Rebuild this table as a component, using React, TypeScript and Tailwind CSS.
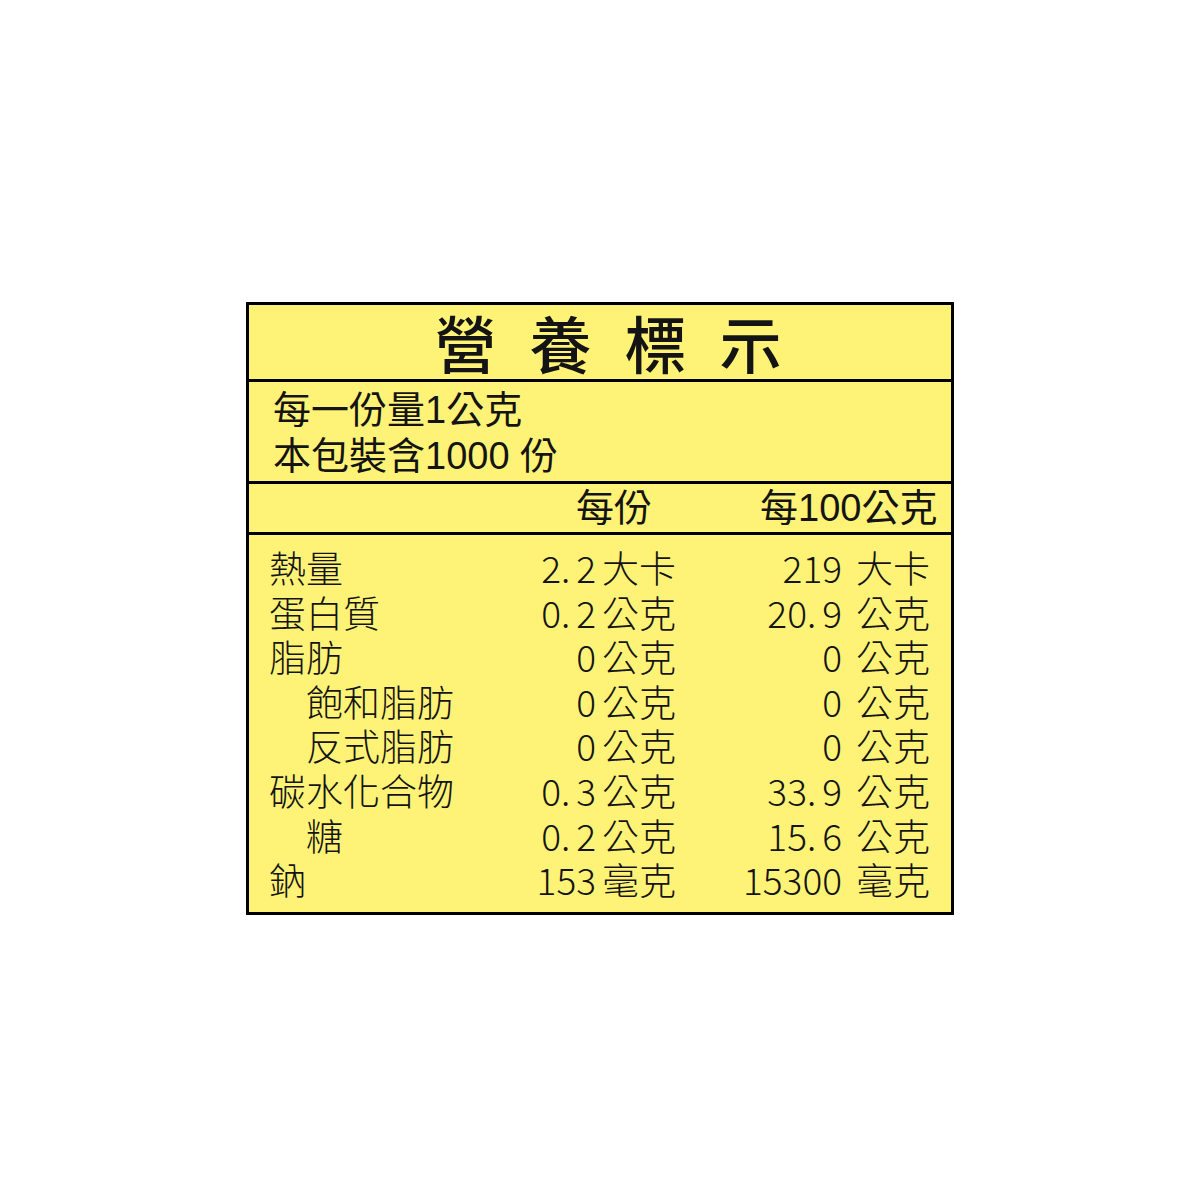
const font = {
  fontFamily: '"Noto Sans CJK TC", "Noto Sans CJK SC", "Noto Sans", sans-serif',
};

// serving lines and column header use Arial-like digits
const latinFirst = {
  fontFamily: '"Liberation Sans", "Noto Sans CJK TC", "Noto Sans CJK SC", sans-serif',
};

type Row = {
  label: string;
  indent?: boolean;
  perServing: string;
  unit1: string;
  per100: string;
  unit2: string;
};

const rows: Row[] = [
  { label: "熱量", perServing: "2.2", unit1: "大卡", per100: "219", unit2: "大卡" },
  { label: "蛋白質", perServing: "0.2", unit1: "公克", per100: "20.9", unit2: "公克" },
  { label: "脂肪", perServing: "0", unit1: "公克", per100: "0", unit2: "公克" },
  { label: "飽和脂肪", indent: true, perServing: "0", unit1: "公克", per100: "0", unit2: "公克" },
  { label: "反式脂肪", indent: true, perServing: "0", unit1: "公克", per100: "0", unit2: "公克" },
  { label: "碳水化合物", perServing: "0.3", unit1: "公克", per100: "33.9", unit2: "公克" },
  { label: "糖", indent: true, perServing: "0.2", unit1: "公克", per100: "15.6", unit2: "公克" },
  { label: "鈉", perServing: "153", unit1: "毫克", per100: "15300", unit2: "毫克" },
];

// the label prints a wider gap after the decimal point
const Num = ({ value }: { value: string }) => {
  const [a, b] = value.split(".");
  if (b === undefined) return <>{value}</>;
  return (
    <>
      {a}
      <span className="mr-[6px]">.</span>
      {b}
    </>
  );
};

export default function App() {
  return (
    <div className="min-h-[1200px] w-full bg-white pt-[302px]" style={font}>
      <div className="mx-auto w-[708px] border-[3px] border-black bg-[#fff377] text-[#141414]">
        {/* Title */}
        <div className="flex h-[77px] items-center justify-center gap-[33px] border-b-[3px] border-black pl-[16px] text-[62px] font-medium leading-none">
          <span>營</span>
          <span>養</span>
          <span>標</span>
          <span>示</span>
        </div>

        {/* Serving info */}
        <div
          className="flex h-[102px] flex-col justify-center border-b-[3px] border-black pl-[24px] pt-[2px] text-[38px] font-normal leading-[46px]"
          style={latinFirst}
        >
          <div>每一份量1公克</div>
          <div>本包裝含1000 份</div>
        </div>

        {/* Column header */}
        <div
          className="flex h-[51px] items-center border-b-[3px] border-black text-[38px] font-normal leading-none"
          style={latinFirst}
        >
          <span className="ml-[327px]">每份</span>
          <span className="ml-[108px]">每100公克</span>
        </div>

        {/* Nutrients */}
        <div className="flex flex-col pb-[10px] pl-[20px] pt-[10px] text-[37px] font-light leading-[44.6px]">
          {rows.map((r) => (
            <div key={r.label} className="flex">
              <div className={`w-[231px] ${r.indent ? "pl-[37px]" : ""}`}>{r.label}</div>
              <div className="w-[96px] text-right">
                <Num value={r.perServing} />
              </div>
              <div className="ml-[6px] w-[78px]">{r.unit1}</div>
              <div className="w-[162px] text-right">
                <Num value={r.per100} />
              </div>
              <div className="ml-[14px]">{r.unit2}</div>
            </div>
          ))}
        </div>
      </div>
    </div>
  );
}
